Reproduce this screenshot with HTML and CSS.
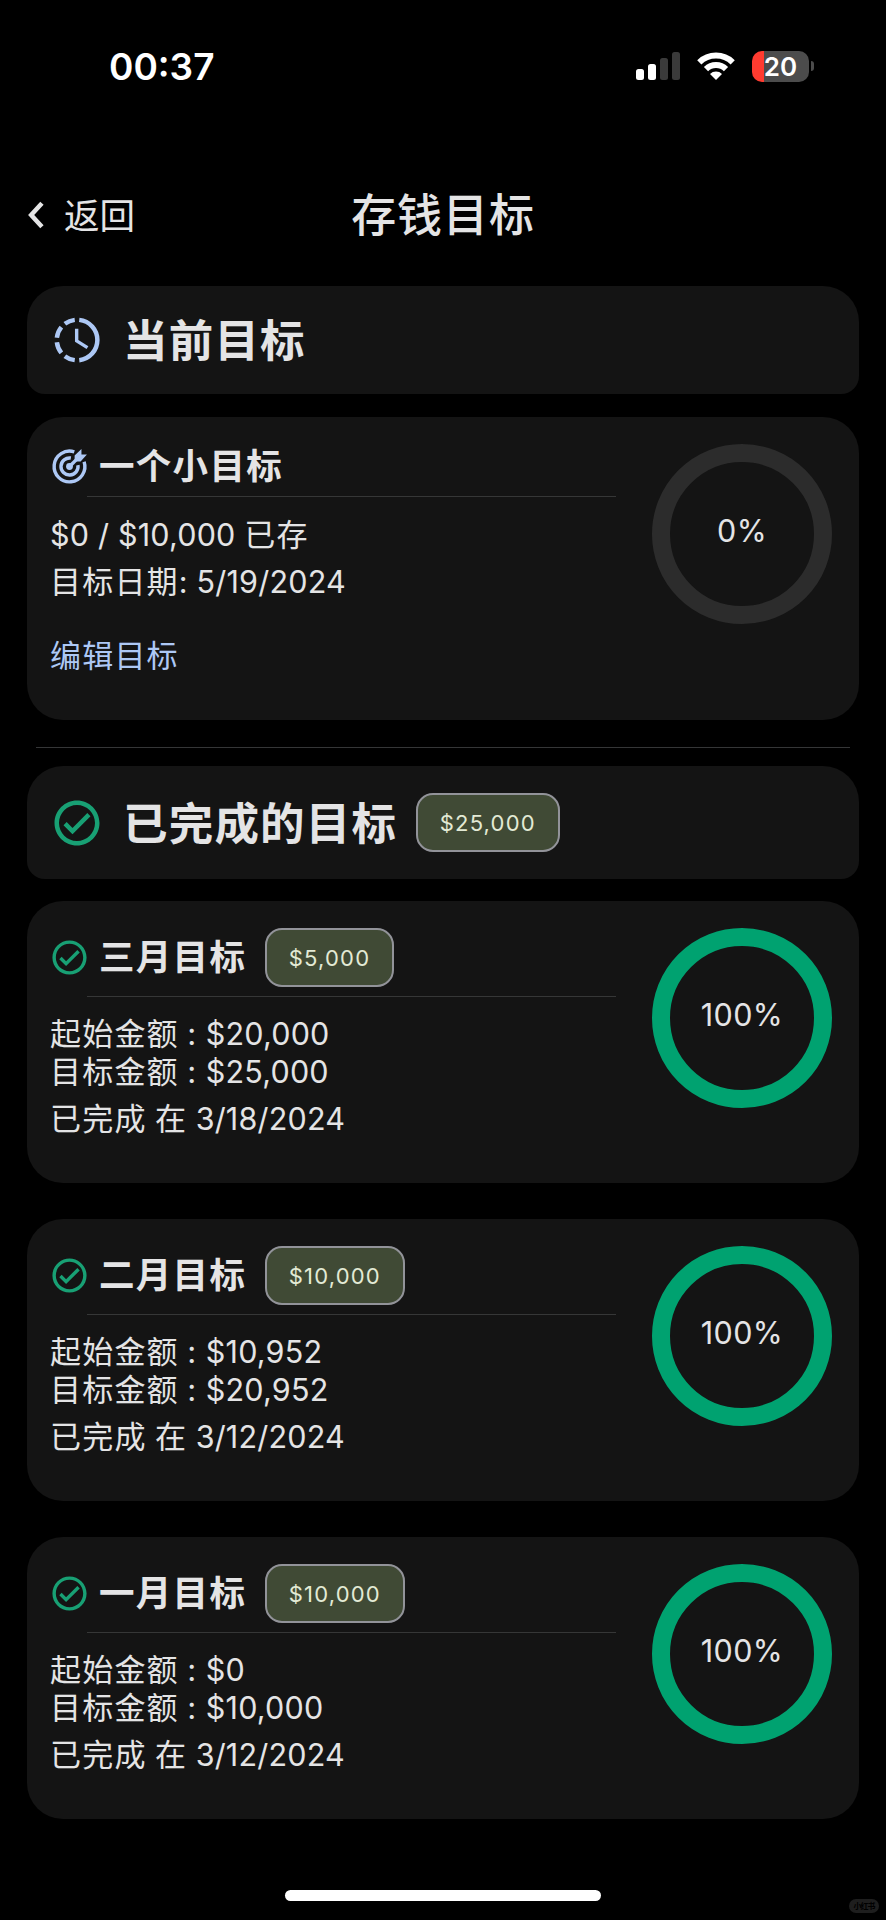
FILE: index.html
```html
<!DOCTYPE html>
<html lang="zh-CN">
<head>
<meta charset="utf-8">
<title>存钱目标</title>
<link rel="stylesheet" href="styles.css">
</head>
<body>
<svg class="defs" aria-hidden="true">
  <symbol id="check" viewBox="0 0 24 24"><path d="M12 2C6.480 2 2 6.480 2 12s4.480 10 10 10 10-4.480 10-10S17.520 2 12 2zm0 18c-4.410 0-8-3.590-8-8s3.590-8 8-8 8 3.590 8 8-3.590 8-8 8zm4.590-12.420L10 14.170l-2.590-2.580L6 13l4 4 8-8z" fill="currentColor"/></symbol>
</svg>
<header class="status">
  <span class="time">00:37</span>
  <div class="status-icons">
    <svg class="signal" viewBox="0 0 44 28"><g fill="#fff"><rect y="17" width="8" height="11" rx="2.500"/><rect x="12" y="12" width="8" height="16" rx="2.500"/></g><g fill="#3a3a3a"><rect x="24" y="6" width="8" height="22" rx="2.500"/><rect x="36" width="8" height="28" rx="2.500"/></g></svg>
    <svg class="wifi" viewBox="0 0 38 28"><g fill="none" stroke="#fff" stroke-width="6"><path d="M2.300 10.300A24 24 0 0 1 35.700 10.300"/><path d="M9 17.100A14.300 14.300 0 0 1 29 17.100"/></g><path d="M19 28l-6-6a8.700 8.700 0 0 1 12 0z" fill="#fff"/></svg>
    <div class="battery"><span>20</span></div>
    <i class="cap"></i>
  </div>
</header>
<nav class="nav">
  <a class="back"><svg viewBox="0 0 16 26"><path d="M13.500 2L3.500 13l10 11" fill="none" stroke="currentColor" stroke-width="4.200"/></svg><span>返回</span></a>
  <h1>存钱目标</h1>
</nav>
<main>
  <section class="section current">
    <svg class="icon-lg blue" viewBox="0 0 24 24" fill="none" stroke="currentColor"><path stroke-width="2" d="M13 3.050A9 9 0 0 1 13 20.950M11 3.050A9 9 0 0 0 6.600 4.800M5.050 6.300A9 9 0 0 0 3.050 11M3.050 13A9 9 0 0 0 5.050 17.700M6.600 19.200A9 9 0 0 0 11 20.950"/><path stroke-width="1.500" d="M11.850 7v5.400l4.800 3"/></svg>
    <h2>当前目标</h2>
  </section>
  <article class="card active">
    <div class="info">
      <div class="title"><svg class="icon blue" viewBox="0 0 24 24" fill="none" stroke="currentColor"><path stroke-width="2" d="M14.800 3.450A9 9 0 1 0 20.550 9.200"/><path stroke-width="2" d="M12.800 7.060A5 5 0 1 0 16.940 11.200"/><path stroke-width="2" d="M12 12l5.500-5.500"/><circle cx="12" cy="12" r="2" fill="currentColor" stroke="none"/><path d="M15 9V5.500L19 1.800V5h3.200L18.500 9z" fill="currentColor" stroke="none"/></svg><h3>一个小目标</h3></div>
      <p>$0 / $10,000 <span class="zh">已存</span></p>
      <p class="date"><span class="zh">目标日期</span>: 5/19/2024</p>
      <a class="edit zh">编辑目标</a>
    </div>
    <div class="ring empty">0%</div>
  </article>
  <hr>
  <section class="section completed">
    <svg class="icon-lg green"><use href="#check"/></svg>
    <h2>已完成的目标</h2><span class="badge">$25,000</span>
  </section>
  <article class="card done">
    <div class="info">
      <div class="title"><svg class="icon green"><use href="#check"/></svg><h3>三月目标</h3><span class="badge">$5,000</span></div>
      <p><span class="zh">起始金额 : </span>$20,000</p><p><span class="zh">目标金额 : </span>$25,000</p><p class="date"><span class="zh">已完成 在 </span>3/18/2024</p>
    </div>
    <div class="ring">100%</div>
  </article>
  <article class="card done">
    <div class="info">
      <div class="title"><svg class="icon green"><use href="#check"/></svg><h3>二月目标</h3><span class="badge">$10,000</span></div>
      <p><span class="zh">起始金额 : </span>$10,952</p><p><span class="zh">目标金额 : </span>$20,952</p><p class="date"><span class="zh">已完成 在 </span>3/12/2024</p>
    </div>
    <div class="ring">100%</div>
  </article>
  <article class="card done">
    <div class="info">
      <div class="title"><svg class="icon green"><use href="#check"/></svg><h3>一月目标</h3><span class="badge">$10,000</span></div>
      <p><span class="zh">起始金额 : </span>$0</p><p><span class="zh">目标金额 : </span>$10,000</p><p class="date"><span class="zh">已完成 在 </span>3/12/2024</p>
    </div>
    <div class="ring">100%</div>
  </article>
</main>
<footer><div class="home"></div><span class="mark">小红书</span></footer>
</body>
</html>
```

FILE: styles.css
```css
* { box-sizing: border-box; }
body {
  margin: 0;
  width: 886px;
  height: 1920px;
  overflow: hidden;
  background: #000;
  color: #e4e4e5;
  font-family: Inter, "Noto Sans CJK SC", sans-serif;
  font-size: 30.5px;
  letter-spacing: 0.2px;
}
h1, h2, h3, p { margin: 0; white-space: nowrap; }
.defs { position: absolute; width: 0; height: 0; }
.blue { color: #adc8f5; }
.green { color: #18a074; }
.zh { font-size: 31px; letter-spacing: 1.2px; word-spacing: -1.5px; }

.status { display: flex; justify-content: space-between; align-items: center; height: 132px; padding: 0 72px 0 109px; }
.time { color: #fff; font-size: 37px; font-weight: 600; letter-spacing: 0; }
.status-icons { display: flex; align-items: center; }
.signal { width: 44px; height: 28px; }
.wifi { width: 38px; height: 28px; margin: 0 17px; }
.battery { width: 57px; height: 31px; border-radius: 10px; background: linear-gradient(90deg, #ff3b30 12px, #4c4c4c 12px); display: grid; place-items: center; color: #fff; font-size: 26px; font-weight: 600; letter-spacing: 0; }
.cap { width: 3px; height: 10px; margin-left: 2px; border-radius: 0 3px 3px 0; background: #4c4c4c; }

.nav { display: grid; grid-template-columns: 1fr auto 1fr; align-items: center; height: 154px; padding: 14px 27px 0; }
.back { display: flex; align-items: center; gap: 19px; padding-bottom: 3px; font-size: 35.5px; letter-spacing: 0; }
.back span { margin-bottom: 3px; }
.back svg { width: 18px; height: 28px; }
h1 { font-size: 45px; font-weight: 500; letter-spacing: 0.9px; line-height: 60px; }

main { padding: 0 27px; }
.section { display: flex; align-items: center; padding: 0 22px 0 23px; border-radius: 36px 36px 18px 18px; background: #141414; }
.current { height: 108px; margin-bottom: 23px; }
.completed { height: 113px; margin-bottom: 22px; }
.icon-lg { width: 54px; height: 54px; margin-right: 19px; }
h2 { padding-top: 2px; font-size: 44.5px; font-weight: 600; letter-spacing: 1.2px; line-height: 60px; }

.card { display: flex; justify-content: space-between; padding: 27px 27px 0 23px; border-radius: 36px; background: #141414; }
.active { height: 303px; }
.done { height: 282px; margin-bottom: 36px; }
.info { width: 566px; }
.title { display: flex; align-items: center; height: 69px; margin-bottom: 18px; background: linear-gradient(#363737, #363737) right bottom / 529px 1px no-repeat; }
.active .title { height: 53px; padding-bottom: 8px; margin-bottom: 19px; }
.done .title { padding-bottom: 10px; }
.icon { width: 41px; height: 41px; margin: 0 9px 0 -1px; }
h3 { font-size: 35.5px; font-weight: 600; letter-spacing: 1.3px; line-height: 44px; }
.info p { height: 38px; line-height: 38px; }
.info .date { margin-top: 9px; }
.edit { display: block; margin-top: 36px; line-height: 38px; color: #adc8f5; }
.badge { margin-left: 18.5px; height: 59px; padding: 0 22px; border: 2px solid #929399; border-radius: 17px; background: #404a35; color: #e3ead5; font-size: 22px; line-height: 56px; letter-spacing: 1.2px; }
.ring { flex: none; width: 180px; height: 180px; padding-bottom: 8px; border: 18px solid #00a270; border-radius: 50%; display: grid; place-items: center; font-size: 30.5px; letter-spacing: 0.4px; }
.empty { border-color: #2c2c2c; }
hr { height: 1px; margin: 27px 9px 18px; border: 0; background: #353637; }

footer { position: absolute; left: 0; top: 1889px; width: 886px; height: 24px; display: flex; justify-content: center; }
.home { width: 316px; height: 11px; margin-top: 1px; border-radius: 6px; background: #fff; }
.mark { position: absolute; left: 849px; top: 10px; width: 30px; height: 14px; border-radius: 7px; background: #1e1e1e; color: #000; font-size: 8px; font-weight: 700; line-height: 14px; letter-spacing: -1px; text-align: center; }
```
